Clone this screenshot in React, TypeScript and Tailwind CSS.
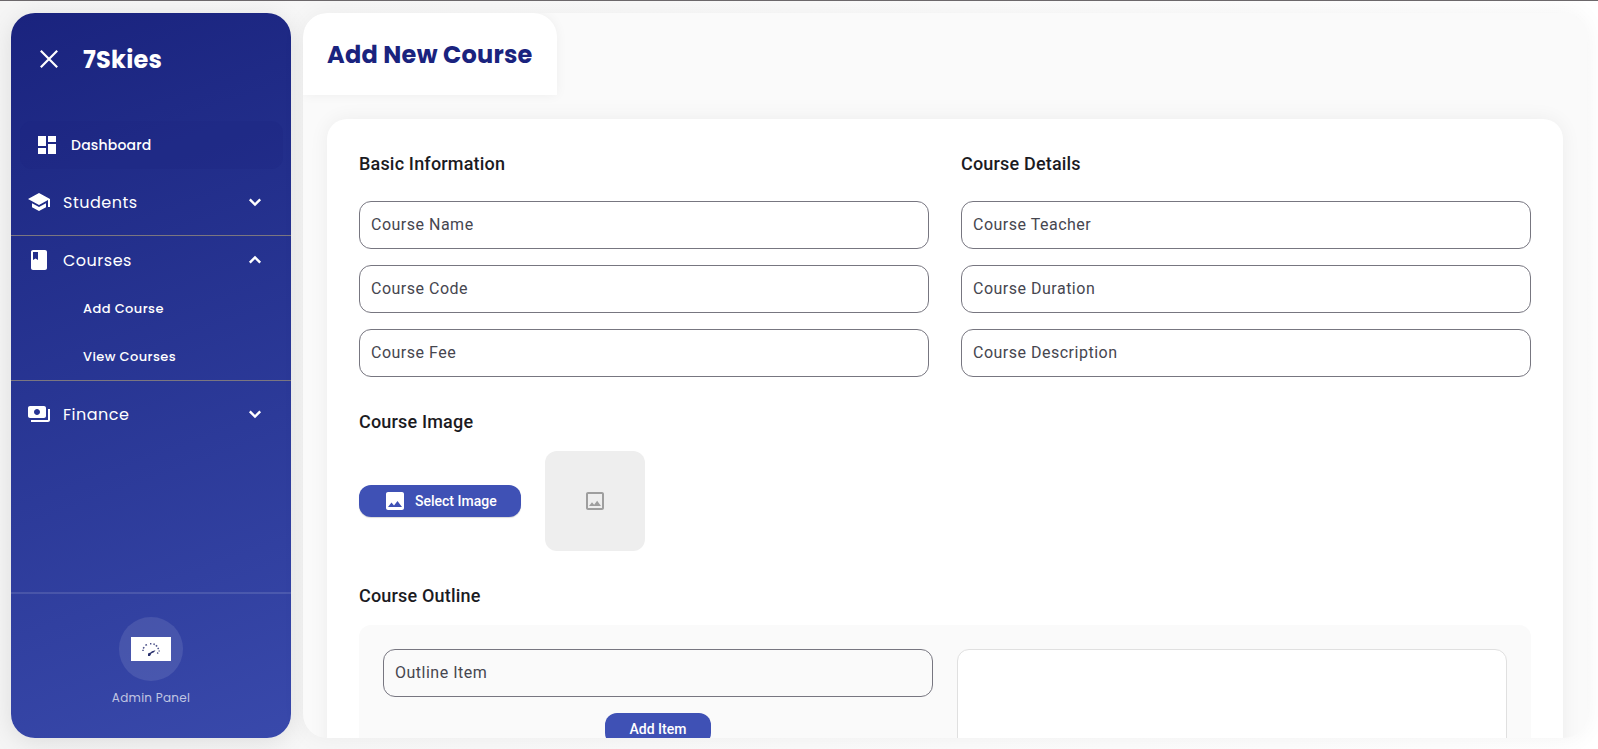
import type { ReactNode } from "react";
import { MdBook, MdDashboard, MdImage, MdOutlineImage, MdPayments, MdSchool } from "react-icons/md";

const brand = "font-[Poppins,Inter,sans-serif]";

function Chevron({ up = false }: { up?: boolean }) {
  return (
    <svg
      width="24"
      height="24"
      viewBox="0 0 24 24"
      fill="none"
      stroke="white"
      strokeWidth="2.4"
      className={up ? "rotate-180" : ""}
    >
      <path d="m6.8 9.4 5.2 5.2 5.2-5.2" />
    </svg>
  );
}

function MenuRow({ icon, label, open }: { icon: ReactNode; label: string; open?: boolean }) {
  return (
    <div className="flex h-12 items-center pr-6 pl-4 text-2xl">
      {icon}
      <span className="ml-3 pt-0.5 text-base tracking-[0.5px]">{label}</span>
      <span className="ml-auto">
        <Chevron up={open} />
      </span>
    </div>
  );
}

function SubItem({ label }: { label: string }) {
  return <div className="flex h-12 items-center pt-0.5 pl-[72px] text-[13px] font-medium tracking-[0.4px]">{label}</div>;
}

function Field({ label }: { label: string }) {
  return (
    <div className="flex h-12 items-center rounded-xl border border-[#777680] px-[11px] text-base tracking-[0.5px] text-[#46464f]">
      {label}
    </div>
  );
}

function Heading({ children }: { children: ReactNode }) {
  return <h2 className="h-7 text-[18px] leading-7 font-medium tracking-[0.18px] text-[#1b1b1f]">{children}</h2>;
}

function Sidebar() {
  return (
    <aside
      className={`${brand} flex h-[725px] w-[280px] shrink-0 flex-col overflow-hidden rounded-3xl bg-linear-160 from-[#1a237e] to-[#3949ab] text-white shadow-[0_4px_24px_rgba(0,0,0,0.1)]`}
    >
      <div className="flex h-[108px] shrink-0 items-start pt-[26px] pl-[30px]">
        <svg width="16" height="40" viewBox="0 0 16 40" fill="none" stroke="white" strokeWidth="2.2" className="overflow-visible">
          <path d="M-0.2 11.8 16.2 28.2M16.2 11.8-0.2 28.2" />
        </svg>
        <span className="ml-[26px] text-2xl leading-[41px] font-bold tracking-[0.24px]">7Skies</span>
      </div>
      <div className="mr-2 ml-[9px] flex h-12 shrink-0 items-center rounded-xl bg-[#1a237e]/25 pl-[15px] text-2xl">
        <MdDashboard />
        <span className="ml-3 text-sm font-medium tracking-[0.2px]">Dashboard</span>
      </div>
      <div className="pt-[9px] pb-[9px]">
        <MenuRow icon={<MdSchool />} label="Students" />
      </div>
      <div className="h-[146px] shrink-0 border-y border-[#7b7680]">
        <MenuRow icon={<MdBook />} label="Courses" open />
        <SubItem label="Add Course" />
        <SubItem label="View Courses" />
      </div>
      <div className="pt-[9px]">
        <MenuRow icon={<MdPayments />} label="Finance" />
      </div>
      <div className="mt-auto flex h-[146px] shrink-0 flex-col items-center border-t-2 border-white/12 pt-[23px]">
        <div className="flex size-16 shrink-0 items-center justify-center rounded-full bg-white/10">
          <svg width="40" height="24" viewBox="0 0 40 24">
            <path d="M0 0h40v24H0z" fill="white" />
            <path
              d="M12 14v-1.2m.2-1.3 1-1.4m1.2-1.8 1.6-.7m3-.8h1.4m2 .1 1.4.6m1 .8 1.4 1m.6 1.6.8 1.2m.6 1.4v1m-1 1.2-1 .8"
              stroke="#4a5088"
              strokeWidth="1.5"
              fill="none"
            />
            <path d="m17 16.5 2.5-1 1.5-1.3 3.5-1-1.5 2-2.5 1-1.5 2.8h-2z" fill="#29306c" />
          </svg>
        </div>
        <span className="mt-2 text-xs leading-[18px] tracking-[0.25px] text-white/70">Admin Panel</span>
      </div>
    </aside>
  );
}

export default function App() {
  return (
    <div className="h-[749px] overflow-hidden border-t border-[#6c686b] bg-linear-to-r from-[#f5f5f5] to-white font-[Roboto,sans-serif]">
      <div className="flex gap-3 pt-3 pl-[11px]">
        <Sidebar />
        <main className="h-[725px] w-[1284px] shrink-0 rounded-3xl bg-[#fafafa] shadow-[0_0_24px_rgba(0,0,0,0.05)]">
          <div className="h-full overflow-hidden rounded-3xl">
            <header
              className={`${brand} h-[82px] w-[254px] rounded-t-3xl bg-white pt-[22px] pl-6 text-2xl leading-10 font-bold tracking-[0.24px] whitespace-nowrap text-[#1a237e] shadow-[0_0_12px_rgba(0,0,0,0.05)]`}
            >
              Add New Course
            </header>
            <section className="mx-6 mt-6 h-[900px] rounded-[20px] bg-white px-8 pt-[31px] shadow-[0_0_20px_rgba(0,0,0,0.06)]">
              <div className="grid grid-cols-2 gap-x-8">
                <div className="flex flex-col gap-4">
                  <div className="mb-[7px]">
                    <Heading>Basic Information</Heading>
                  </div>
                  <Field label="Course Name" />
                  <Field label="Course Code" />
                  <Field label="Course Fee" />
                </div>
                <div className="flex flex-col gap-4">
                  <div className="mb-[7px]">
                    <Heading>Course Details</Heading>
                  </div>
                  <Field label="Course Teacher" />
                  <Field label="Course Duration" />
                  <Field label="Course Description" />
                </div>
              </div>
              <div className="mt-[31px]">
                <Heading>Course Image</Heading>
              </div>
              <div className="mt-[15px] flex items-center gap-6">
                <button className="flex h-8 w-[162px] items-center rounded-xl bg-[#3f51b5] pl-6 text-sm font-medium text-white shadow-[0_1px_1px_rgba(0,0,0,0.15)]">
                  <MdImage size={24} />
                  <span className="ml-2">Select Image</span>
                </button>
                <div className="flex size-[100px] items-center justify-center rounded-xl bg-[#eeeeee]">
                  <MdOutlineImage size={24} color="#9e9e9e" />
                </div>
              </div>
              <div className="mt-[31px]">
                <Heading>Course Outline</Heading>
              </div>
              <div className="mt-[15px] grid h-[300px] grid-cols-2 gap-6 rounded-xl bg-[#fafafa] p-6">
                <div className="flex flex-col">
                  <Field label="Outline Item" />
                  <button className="mt-4 h-8 w-[106px] self-center rounded-xl bg-[#3f51b5] text-sm font-medium text-white">
                    Add Item
                  </button>
                </div>
                <div className="rounded-xl border border-[#e0e0e0] bg-white" />
              </div>
            </section>
          </div>
        </main>
      </div>
    </div>
  );
}
